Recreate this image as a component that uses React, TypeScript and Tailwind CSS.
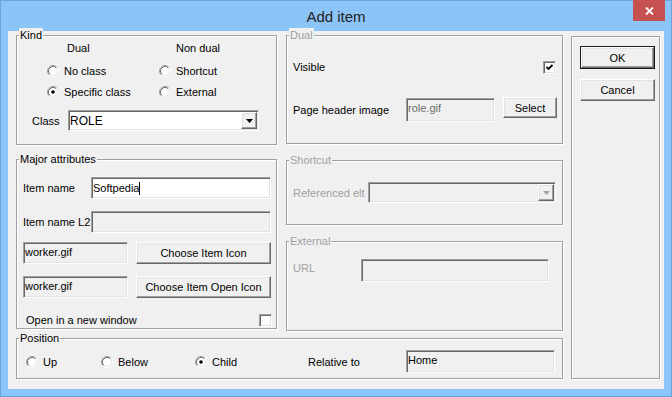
import React from 'react';

const sunken =
  'border border-t-[#a0a0a0] border-l-[#a0a0a0] border-b-white border-r-white shadow-[inset_1px_1px_0_#696969,inset_-1px_-1px_0_#e3e3e3]';
const raised =
  'border border-t-white border-l-white border-b-[#696969] border-r-[#696969] shadow-[inset_-1px_-1px_0_#a0a0a0,inset_1px_1px_0_#e3e3e3] bg-[#f0f0f0]';

interface GroupBoxProps {
  label?: string;
  disabled?: boolean;
  className?: string;
  children?: React.ReactNode;
}

const GroupBox: React.FC<GroupBoxProps> = ({ label, disabled, className, children }) => (
  <div className={`relative border border-[#a0a0a0] shadow-[1px_1px_0_#fff,inset_1px_1px_0_#fff] ${className ?? ''}`}>
    {label && (
      <span
        className={`absolute left-[2px] -top-[8px] px-[1px] bg-[#f0f0f0] leading-[14px] ${disabled ? 'text-[#a0a0a0]' : 'text-black'}`}
      >
        {label}
      </span>
    )}
    {children}
  </div>
);

const Radio: React.FC<{ label: string; checked?: boolean; className?: string }> = ({ label, checked, className }) => (
  <div className={`flex items-center gap-[5px] h-[14px] ${className ?? ''}`}>
    <svg width="12" height="12" viewBox="0 0 12 12" className="shrink-0">
      <circle cx="6" cy="6" r="4.5" fill="#fff" />
      <path d="M2.11 9.89 A5.5 5.5 0 0 1 9.89 2.11" fill="none" stroke="#a0a0a0" />
      <path d="M9.89 2.11 A5.5 5.5 0 0 1 2.11 9.89" fill="none" stroke="#fff" />
      <path d="M2.82 9.18 A4.5 4.5 0 0 1 9.18 2.82" fill="none" stroke="#696969" />
      <path d="M9.18 2.82 A4.5 4.5 0 0 1 2.82 9.18" fill="none" stroke="#e3e3e3" />
      {checked && <circle cx="6" cy="6" r="1.8" fill="#000" />}
    </svg>
    <span>{label}</span>
  </div>
);

const CheckBox: React.FC<{ checked?: boolean }> = ({ checked }) => (
  <div className={`w-[13px] h-[13px] bg-white shrink-0 flex items-center justify-center ${sunken}`}>
    {checked && (
      <svg width="9" height="9" viewBox="0 0 9 9">
        <path d="M1.5 4 L3.5 6 L7.5 2" fill="none" stroke="#000" strokeWidth="1.8" />
      </svg>
    )}
  </div>
);

const TextBox: React.FC<{ value?: string; className?: string; enabled?: boolean; caret?: boolean }> = ({
  value,
  className,
  enabled,
  caret,
}) => (
  <div className={`flex items-center pl-[1px] ${enabled ? 'bg-white' : 'bg-[#f0f0f0]'} ${sunken} ${className ?? ''}`}>
    <span className="leading-[14px]">{value}</span>
    {caret && <span className="w-px h-[13px] bg-black" />}
  </div>
);

const Combo: React.FC<{ value?: string; disabled?: boolean; className?: string }> = ({ value, disabled, className }) => (
  <div className={`flex items-center justify-between pl-[1px] pr-[1px] ${disabled ? 'bg-[#f0f0f0]' : 'bg-white'} ${sunken} ${className ?? ''}`}>
    <span className="leading-[14px] text-[12px]">{value}</span>
    <div className={`w-[16px] h-[17px] flex items-center justify-center ${raised}`}>
      <svg width="7" height="4" viewBox="0 0 7 4">
        <path d="M0 0 H7 L3.5 4 Z" fill={disabled ? '#a0a0a0' : '#000'} />
      </svg>
    </div>
  </div>
);

const Button: React.FC<{ label: string; className?: string; isDefault?: boolean }> = ({ label, className, isDefault }) =>
  isDefault ? (
    <div className={`border border-[#1a1a1a] ${className ?? ''}`}>
      <div className={`w-full h-full flex items-center justify-center ${raised}`}>{label}</div>
    </div>
  ) : (
    <div className={`flex items-center justify-center ${raised} ${className ?? ''}`}>{label}</div>
  );

export default function App() {
  return (
    <div
      className="w-[672px] h-[397px] bg-[#8bc4f6] border border-[#6aa6dc] flex flex-col text-[11px] leading-[14px] text-black"
      style={{ fontFamily: '"Liberation Sans", Arial, sans-serif' }}
    >
      {/* title bar */}
      <div className="relative h-[30px] shrink-0 flex items-center justify-center">
        <span className="text-[15px] text-[#222] pt-[2px]">Add item</span>
        <div className="absolute right-[6px] -top-px w-[32px] h-[21px] bg-[#c75050] flex items-center justify-center">
          <svg width="9" height="8" viewBox="0 0 9 8">
            <path d="M1 0.5 L8 7.5 M8 0.5 L1 7.5" stroke="#fff" strokeWidth="1.8" />
          </svg>
        </div>
      </div>

      {/* client area */}
      <div className="ml-[7px] w-[656px] h-[358px] bg-[#f0f0f0] flex pl-[8px] pt-[4px] relative">
        <div className="w-[547px] flex flex-col">
          <div className="flex gap-[9px]">
            {/* left column */}
            <div className="w-[261px] flex flex-col">
              <GroupBox label="Kind" className="h-[110px]">
                <div className="flex pl-[30px] pt-[5px]">
                  <span className="w-[112px] pl-[20px]">Dual</span>
                  <span className="pl-[17px]">Non dual</span>
                </div>
                <div className="flex pl-[30px] mt-[9px]">
                  <Radio label="No class" className="w-[112px]" />
                  <Radio label="Shortcut" />
                </div>
                <div className="flex pl-[30px] mt-[7px]">
                  <Radio label="Specific class" checked className="w-[112px]" />
                  <Radio label="External" />
                </div>
                <div className="flex items-center pl-[15px] mt-[11px]">
                  <span className="w-[36px]">Class</span>
                  <Combo value="ROLE" className="w-[191px] h-[21px]" />
                </div>
              </GroupBox>

              <GroupBox label="Major attributes" className="h-[170px] mt-[14px]">
                <div className="flex items-center pl-[6px] pt-[17px]">
                  <span className="w-[68px]">Item name</span>
                  <TextBox value="Softpedia" enabled caret className="w-[180px] h-[22px]" />
                </div>
                <div className="flex items-center pl-[6px] mt-[12px]">
                  <span className="w-[68px]">Item name L2</span>
                  <TextBox className="w-[180px] h-[22px]" />
                </div>
                <div className="flex items-center pl-[6px] mt-[9px] gap-[8px]">
                  <TextBox value="worker.gif" className="w-[105px] h-[22px] items-start pt-[2px]" />
                  <Button label="Choose Item Icon" className="w-[135px] h-[22px]" />
                </div>
                <div className="flex items-center pl-[6px] mt-[12px] gap-[8px]">
                  <TextBox value="worker.gif" className="w-[105px] h-[22px] items-start pt-[2px]" />
                  <Button label="Choose Item Open Icon" className="w-[135px] h-[22px]" />
                </div>
                <div className="flex items-center justify-between pl-[9px] pr-[4px] mt-[15px]">
                  <span>Open in a new window</span>
                  <CheckBox />
                </div>
              </GroupBox>
            </div>

            {/* middle column */}
            <div className="w-[277px] flex flex-col">
              <GroupBox label="Dual" disabled className="h-[109px]">
                <div className="flex items-center justify-between pl-[6px] pr-[6px] pt-[24px]">
                  <span>Visible</span>
                  <CheckBox checked />
                </div>
                <div className="flex items-start pl-[6px] mt-[23px]">
                  <span className="w-[113px] mt-[6px]">Page header image</span>
                  <TextBox value="role.gif" className="w-[89px] h-[24px] mt-[1px] text-[#6d6d6d] items-start pt-[2px]" />
                  <Button label="Select" className="w-[54px] h-[21px] ml-[8px]" />
                </div>
              </GroupBox>

              <GroupBox label="Shortcut" disabled className="h-[65px] mt-[16px]">
                <div className="flex items-center pl-[6px] pt-[21px] text-[#a0a0a0]">
                  <span className="w-[75px]">Referenced elt</span>
                  <Combo disabled className="w-[188px] h-[21px]" />
                </div>
              </GroupBox>

              <GroupBox label="External" disabled className="h-[90px] mt-[16px]">
                <div className="flex items-start pl-[6px] pt-[17px] text-[#a0a0a0]">
                  <span className="w-[68px] mt-[2px]">URL</span>
                  <TextBox className="w-[188px] h-[23px]" />
                </div>
              </GroupBox>
            </div>
          </div>

          <GroupBox label="Position" className="h-[41px] mt-[7px]">
            <div className="flex items-center pl-[9px] pt-[11px] h-[34px]">
              <Radio label="Up" className="w-[75px]" />
              <Radio label="Below" className="w-[94px]" />
              <Radio label="Child" checked className="w-[113px]" />
              <span className="w-[98px]">Relative to</span>
              <TextBox value="Home" className="w-[149px] h-[23px] items-start pt-[2px]" />
            </div>
          </GroupBox>
        </div>

        {/* button panel */}
        <GroupBox className="w-[89px] h-[343px] ml-[8px] mt-[1px]">
          <div className="flex flex-col pl-[8px] pt-[9px]">
            <Button label="OK" isDefault className="w-[75px] h-[23px]" />
            <Button label="Cancel" className="w-[75px] h-[22px] mt-[10px]" />
          </div>
        </GroupBox>
      </div>
    </div>
  );
}
